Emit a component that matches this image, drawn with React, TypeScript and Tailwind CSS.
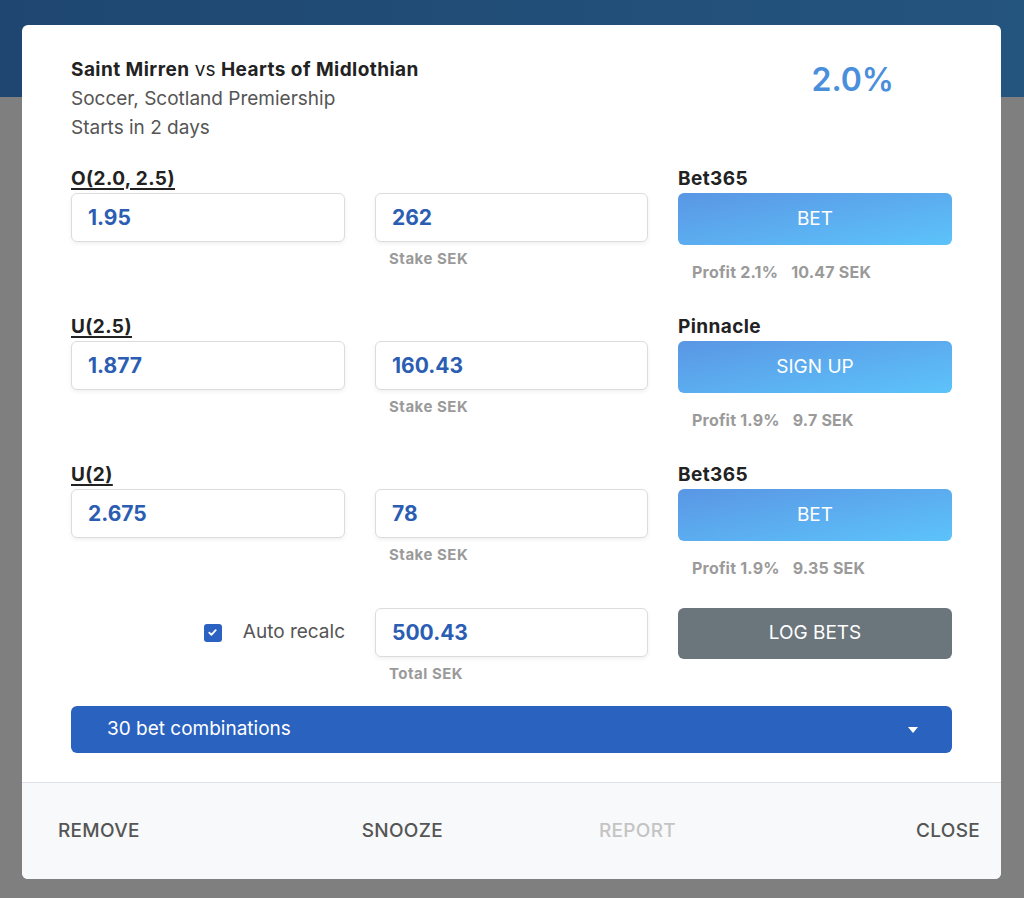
import React from "react";

const font = { fontFamily: "Inter, 'Noto Sans', sans-serif" };

function Input({ value }: { value: string }) {
  return (
    <div className="h-[49px] rounded-[6px] border border-[#dcdcdc] bg-white shadow-[0_2px_4px_rgba(0,0,0,0.06)] flex items-center pl-[16px] text-[21px] font-bold text-[#2b5db3]">
      {value}
    </div>
  );
}

function BetRow({ label, odds, stake, bookie, btn, profit, amount }: { label: string; odds: string; stake: string; bookie: string; btn: string; profit: string; amount: string }) {
  return (
    <div className="grid grid-cols-[274px_273px_274px] gap-x-[30px]">
      <div>
        <div className="h-[26px] leading-[26px] text-[19px] font-bold tracking-[0.4px] text-[#222] underline underline-offset-[3px] decoration-[1.5px]">{label}</div>
        <div className="mt-px"><Input value={odds} /></div>
      </div>
      <div>
        <div className="h-[26px]" />
        <div className="mt-px"><Input value={stake} /></div>
        <div className="mt-[7px] pl-[14px] leading-[20px] text-[15px] font-bold tracking-[0.5px] text-[#9a9a9a]">Stake SEK</div>
      </div>
      <div>
        <div className="h-[26px] leading-[26px] text-[19px] font-bold tracking-[0.4px] text-[#222]">{bookie}</div>
        <div className="mt-px h-[52px] rounded-[6px] bg-linear-to-br from-[#5a96e4] to-[#5cc3fa] flex items-center justify-center text-white text-[19px]">{btn}</div>
        <div className="mt-[17px] pl-[14px] leading-[20px] text-[16px] font-bold tracking-[0.2px] text-[#9a9a9a] flex gap-[13px]">
          <span>{profit}</span>
          <span>{amount}</span>
        </div>
      </div>
    </div>
  );
}

export default function App() {
  return (
    <div className="relative w-[1024px] h-[898px] overflow-hidden bg-[#7f7f7f]" style={font}>
      <div className="h-[97px] bg-linear-to-r from-[#1e4670] to-[#24557f]" />
      <div className="absolute left-[22px] top-[25px] w-[979px] h-[854px] bg-white rounded-[6px] overflow-hidden flex flex-col">
        <div className="flex-1 px-[49px] pt-[30px]">
          <div className="flex justify-between">
            <div className="text-[19px] leading-[29px]">
              <div className="text-[#222]"><span className="font-bold tracking-[0.45px]">Saint Mirren</span> vs <span className="font-bold tracking-[0.45px]">Hearts of Midlothian</span></div>
              <div className="text-[#555]">Soccer, Scotland Premiership</div>
              <div className="text-[#555]">Starts in 2 days</div>
            </div>
            <div className="mr-[58px] mt-[1px] text-[32px] leading-[48px] font-semibold text-[#4a8fdb]">2.0%</div>
          </div>
          <div className="mt-[24px] flex flex-col gap-[32px]">
            <BetRow label="O(2.0, 2.5)" odds="1.95" stake="262" bookie="Bet365" btn="BET" profit="Profit 2.1%" amount="10.47 SEK" />
            <BetRow label="U(2.5)" odds="1.877" stake="160.43" bookie="Pinnacle" btn="SIGN UP" profit="Profit 1.9%" amount="9.7 SEK" />
            <BetRow label="U(2)" odds="2.675" stake="78" bookie="Bet365" btn="BET" profit="Profit 1.9%" amount="9.35 SEK" />
          </div>
          <div className="mt-[30px] grid grid-cols-[274px_273px_274px] gap-x-[30px]">
            <div className="h-[49px] flex items-center justify-end gap-[21px]">
              <div className="w-[18px] h-[18px] rounded-[3px] bg-[#2b62c2] flex items-center justify-center">
                <svg width="11" height="11" viewBox="0 0 12 12"><path d="M2.5 6.2l2.3 2.3 4.7-5" stroke="white" strokeWidth="2" fill="none" strokeLinecap="round" strokeLinejoin="round" /></svg>
              </div>
              <span className="text-[19px] text-[#555]">Auto recalc</span>
            </div>
            <div>
              <Input value="500.43" />
              <div className="mt-[7px] pl-[14px] leading-[20px] text-[15px] font-bold tracking-[0.5px] text-[#9a9a9a]">Total SEK</div>
            </div>
            <div className="h-[51px] rounded-[6px] bg-[#6b757c] flex items-center justify-center text-white text-[19px]">LOG BETS</div>
          </div>
          <div className="mt-[22px] h-[47px] rounded-[6px] bg-[#2a62c0] flex items-center justify-between pl-[36px] pr-[33px] text-white text-[19px]">
            <span>30 bet combinations</span>
            <svg width="12" height="8" viewBox="0 0 12 8"><path d="M1 1h10L6 7z" fill="white" /></svg>
          </div>
        </div>
        <div className="h-[97px] border-t border-[#dee2e6] bg-[#f8f9fa] flex items-center text-[19px] font-medium tracking-[0.3px] text-[#555]">
          <span className="ml-[36px]">REMOVE</span>
          <span className="ml-[222px]">SNOOZE</span>
          <span className="ml-[156px] text-[#c4c4c4]">REPORT</span>
          <span className="ml-auto mr-[21px]">CLOSE</span>
        </div>
      </div>
    </div>
  );
}
